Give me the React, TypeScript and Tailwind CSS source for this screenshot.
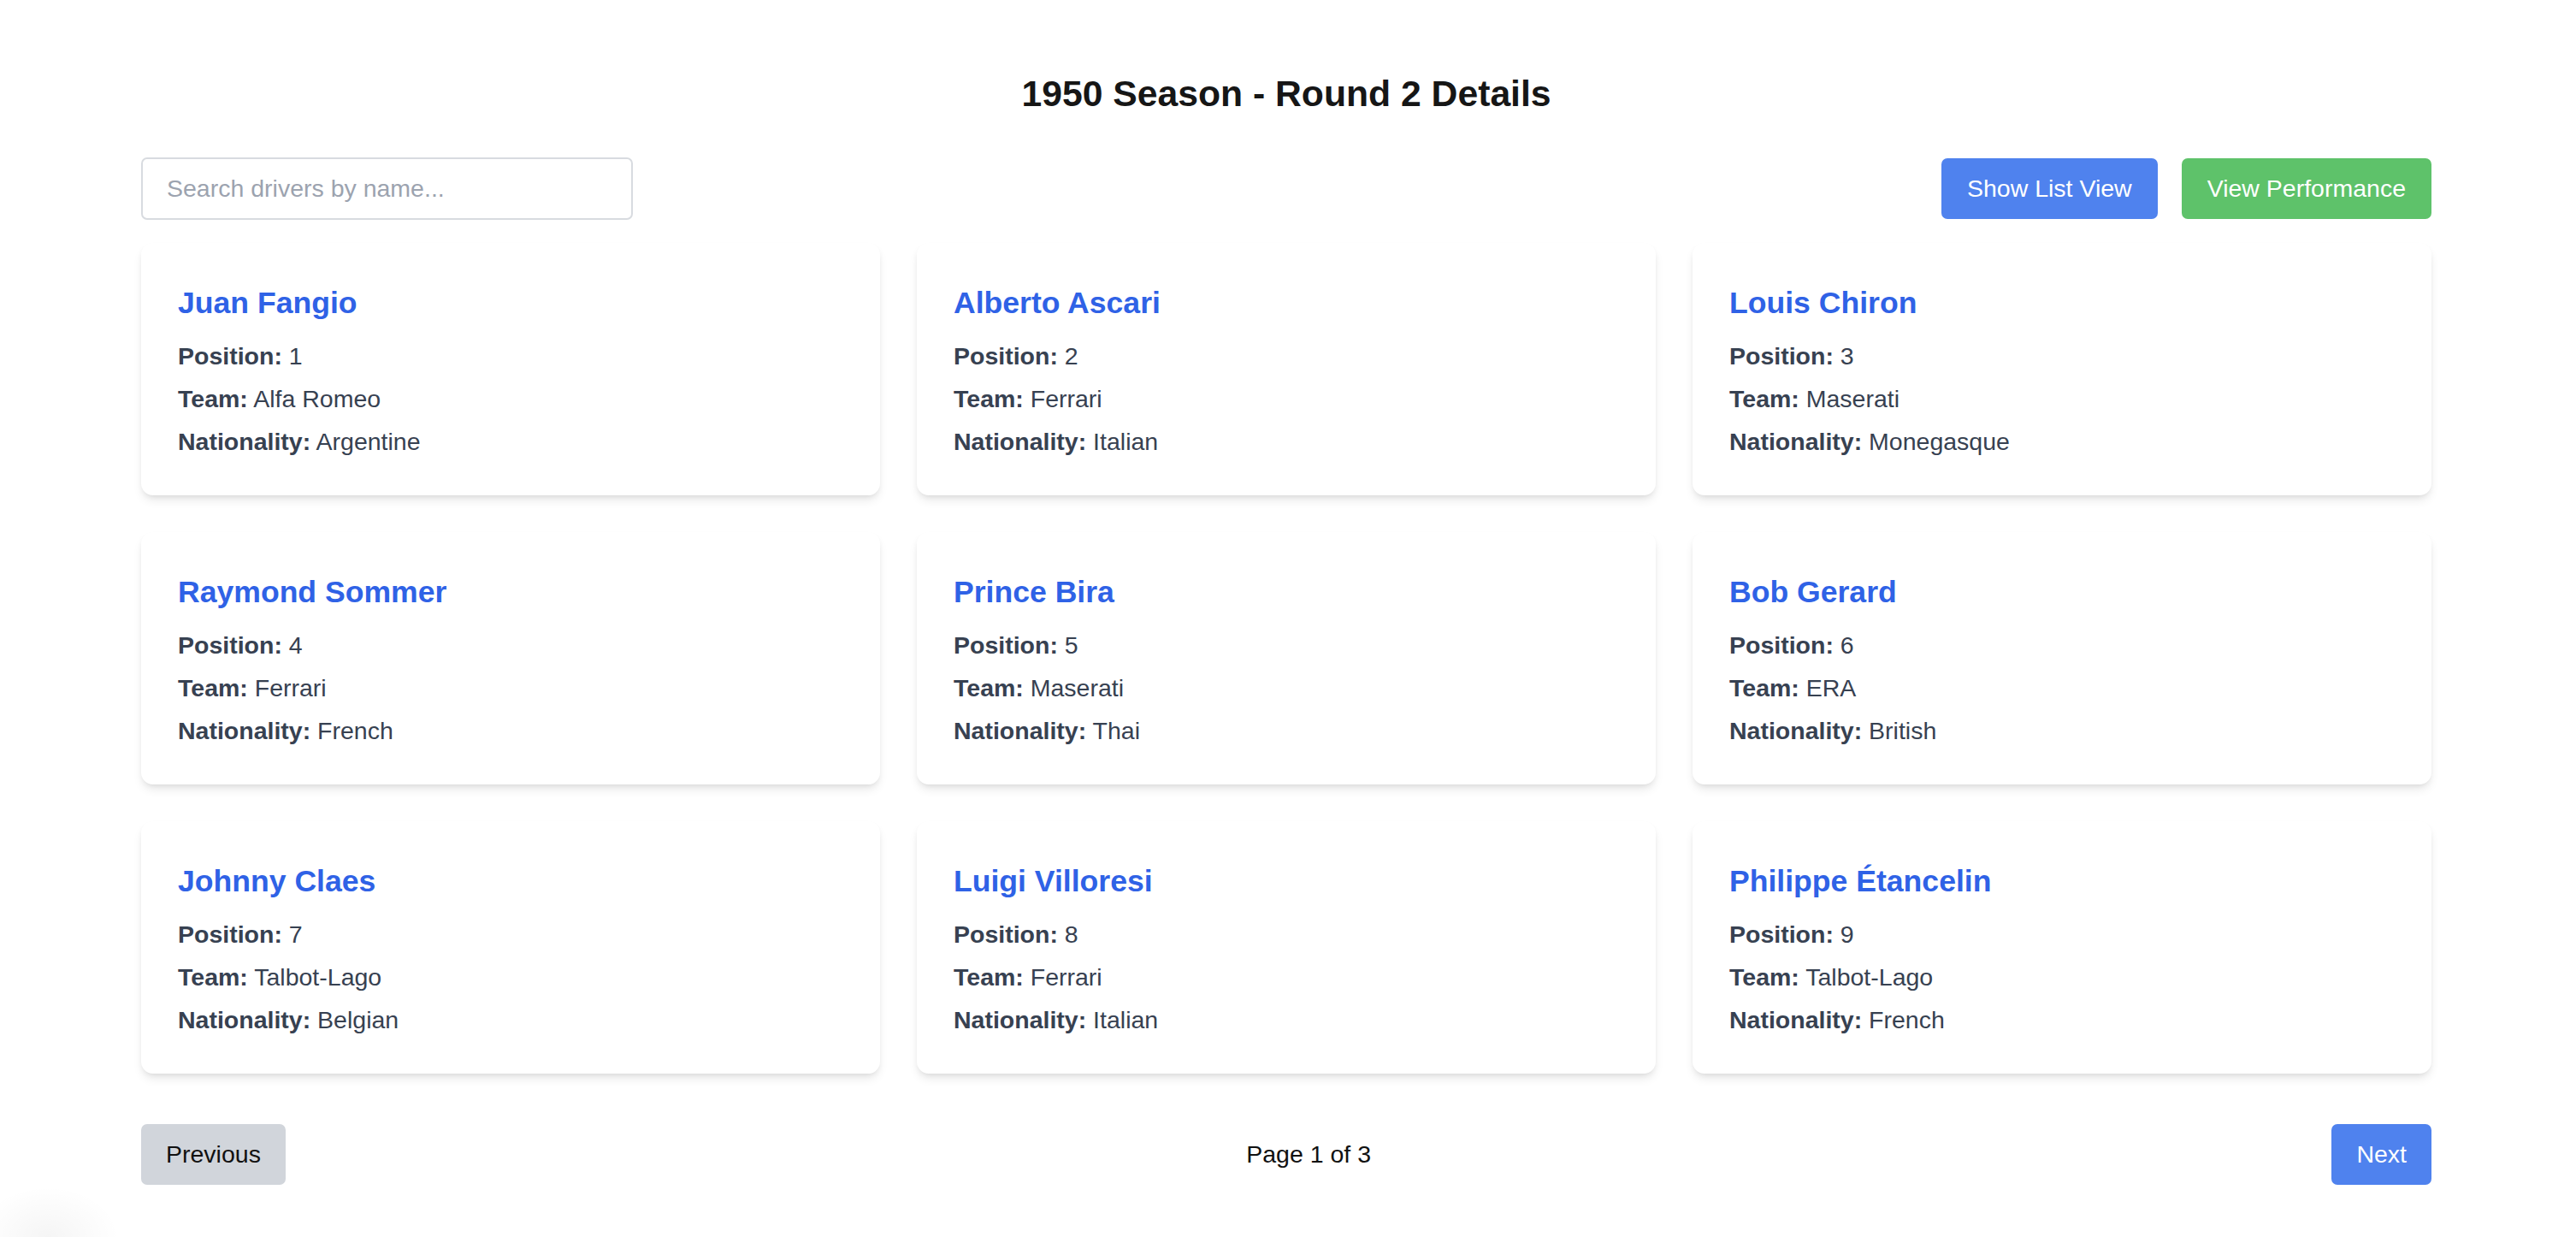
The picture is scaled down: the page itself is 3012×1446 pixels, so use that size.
import React, { useState } from 'react';

interface Driver {
  name: string;
  position: number;
  team: string;
  nationality: string;
}

const drivers: Driver[] = [
  { name: 'Juan Fangio', position: 1, team: 'Alfa Romeo', nationality: 'Argentine' },
  { name: 'Alberto Ascari', position: 2, team: 'Ferrari', nationality: 'Italian' },
  { name: 'Louis Chiron', position: 3, team: 'Maserati', nationality: 'Monegasque' },
  { name: 'Raymond Sommer', position: 4, team: 'Ferrari', nationality: 'French' },
  { name: 'Prince Bira', position: 5, team: 'Maserati', nationality: 'Thai' },
  { name: 'Bob Gerard', position: 6, team: 'ERA', nationality: 'British' },
  { name: 'Johnny Claes', position: 7, team: 'Talbot-Lago', nationality: 'Belgian' },
  { name: 'Luigi Villoresi', position: 8, team: 'Ferrari', nationality: 'Italian' },
  { name: 'Philippe Étancelin', position: 9, team: 'Talbot-Lago', nationality: 'French' },
];

const DriverCard = ({ driver }: { driver: Driver }) => (
  <div className="bg-white rounded-[14px] px-[43px] pt-[45px] pb-[41px] shadow-[0_7px_12px_-2px_rgba(0,0,0,0.1),0_3px_7px_-3px_rgba(0,0,0,0.1)]">
    <h2 className="text-[35.6px] leading-[50px] font-bold text-[#2f62e6] mb-[16px]">{driver.name}</h2>
    <div className="flex flex-col gap-[7px] text-[28.5px] leading-[43px] text-[#374151]">
      <p>
        <span className="font-bold">Position:</span> {driver.position}
      </p>
      <p>
        <span className="font-bold">Team:</span> {driver.team}
      </p>
      <p>
        <span className="font-bold">Nationality:</span> {driver.nationality}
      </p>
    </div>
  </div>
);

const App = () => {
  const [search, setSearch] = useState('');
  const shown = drivers.filter((d) => d.name.toLowerCase().includes(search.toLowerCase()));

  return (
    <div className="relative min-h-screen bg-white font-['Liberation_Sans',Arial,sans-serif]">
      <div className="pl-[165px] pr-[169px] pt-[81px] pb-[56px]">
        <h1 className="text-center text-[42.7px] leading-[57px] font-bold text-[#161616] mb-[46px]">
          1950 Season - Round 2 Details
        </h1>

        <div className="flex items-center justify-between mb-[27px]">
          <input
            type="text"
            value={search}
            onChange={(e) => setSearch(e.target.value)}
            placeholder="Search drivers by name..."
            className="w-[575px] h-[73px] px-[28px] border-2 border-[#d8dbe0] rounded-[7px] text-[28.5px] text-[#111] placeholder:text-[#9ca3af] outline-none"
          />
          <div className="flex gap-[28px]">
            <button className="bg-[#4f82ee] text-white text-[28.5px] leading-[43px] px-[30px] py-[14px] rounded-[7px]">
              Show List View
            </button>
            <button className="bg-[#5ec26a] text-white text-[28.5px] leading-[43px] px-[30px] py-[14px] rounded-[7px]">
              View Performance
            </button>
          </div>
        </div>

        <div className="grid grid-cols-3 gap-[43px]">
          {shown.map((d) => (
            <DriverCard key={d.position} driver={d} />
          ))}
        </div>

        <div className="flex items-center justify-between mt-[59px] text-[28.5px] leading-[43px]">
          <button className="bg-[#d1d5db] text-[#111] px-[29px] py-[14px] rounded-[7px]">Previous</button>
          <span className="text-[#111]">Page 1 of 3</span>
          <button className="bg-[#4f82ee] text-white px-[29px] py-[14px] rounded-[7px]">Next</button>
        </div>
      </div>
      <div className="absolute left-0 bottom-0 w-[140px] h-[60px] bg-[radial-gradient(ellipse_at_40%_100%,rgba(0,0,0,0.04),transparent_70%)]" />
    </div>
  );
};

export default App;
